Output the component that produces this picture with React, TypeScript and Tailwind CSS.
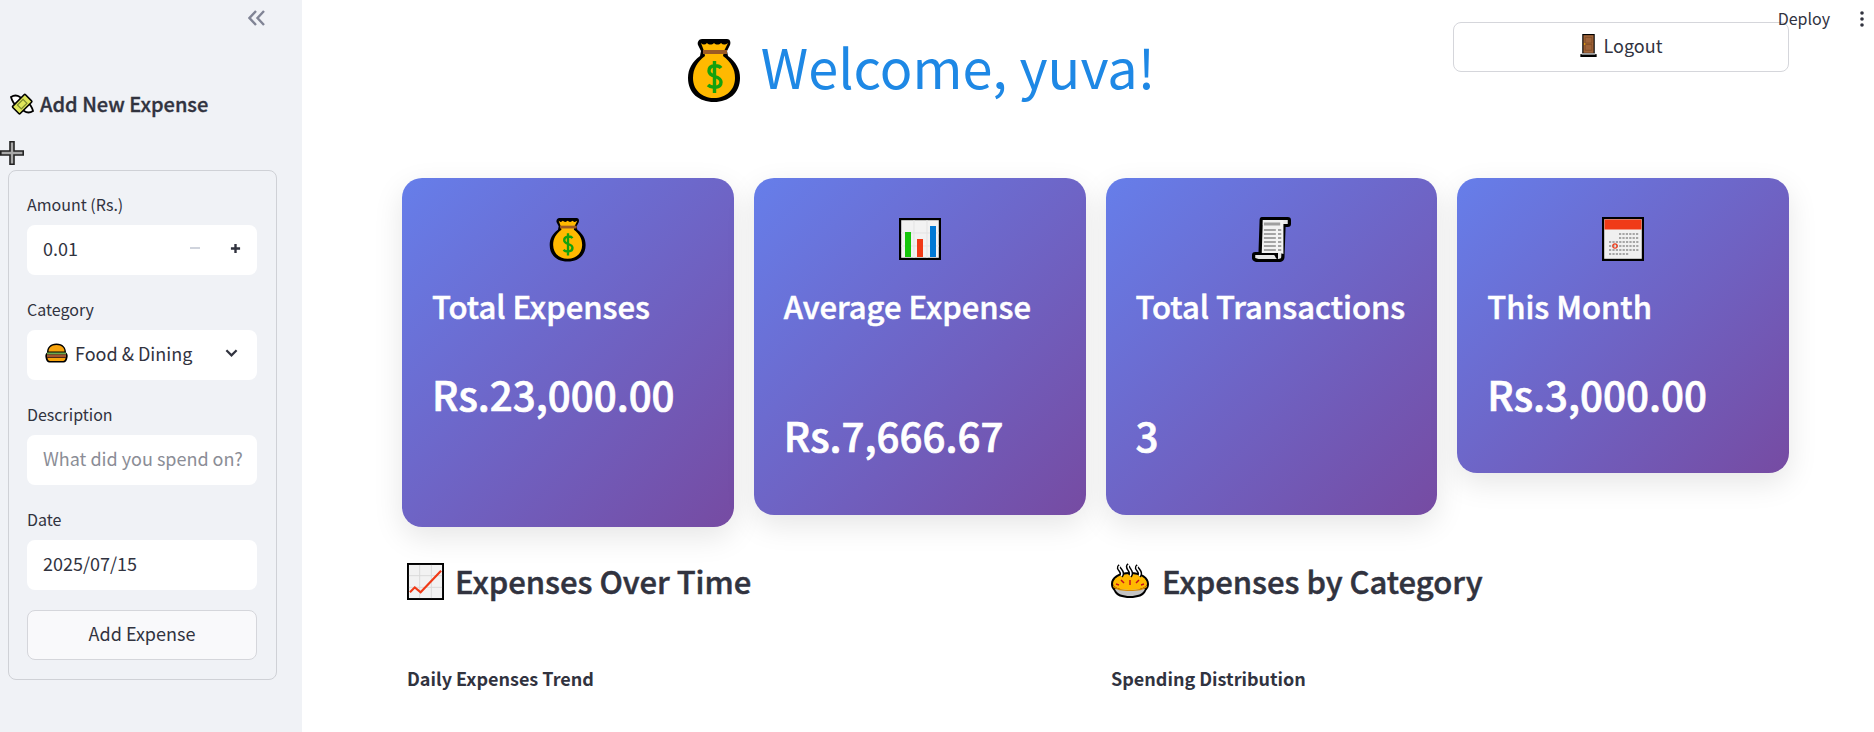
import type { ReactNode } from "react";

const font = { fontFamily: '"Noto Sans CJK SC", "Noto Sans", sans-serif' };

const MoneyBag = ({ className }: { className: string }) => (
  <svg viewBox="0 0 55 68" className={className}>
    <path d="M15 3h25c3 0 4 3 3 6l-3 6 1 5c8 6 12 13 12 22 0 15-11 24-26 24S1 57 1 42c0-9 4-16 12-22l1-5-3-6c-1-3 1-6 4-6z" fill="#000" />
    <path d="M14 7c2 2 4 2 6 0 2 2 5 2 7 0 2 2 5 2 7 0 2 2 4 2 7 0l-4 8-1 5c8 6 12 13 12 22 0 12-9 20-21 20S6 54 6 42c0-9 4-16 12-22l-1-5z" fill="#ffb900" />
    <rect x="16" y="14" width="24" height="4" fill="#9b5a25" />
    <path d="M34 32c-2-3-12-4-12 3 0 7 12 4 12 11 0 7-10 6-13 3M27.500 25v32" fill="none" stroke="#13a10e" strokeWidth="3.400" />
  </svg>
);

const BarChart = () => (
  <svg viewBox="0 0 42 42" className="h-[42px] w-[42px]">
    <rect x="1" y="1" width="40" height="40" fill="#f2f2f2" stroke="#000" strokeWidth="2.400" />
    <path d="M15 2v38M28 2v38M2 15h38M2 28h38" stroke="#e3e3e3" strokeWidth="1" />
    <rect x="6" y="14" width="6" height="25" fill="#16c60c" />
    <rect x="18" y="21" width="6" height="18" fill="#f03a17" />
    <rect x="31" y="8" width="6" height="31" fill="#0078d4" />
  </svg>
);

const Scroll = () => (
  <svg viewBox="0 0 36 46" preserveAspectRatio="none" className="h-[46px] w-[39px]">
    <path d="M9 1h24c2 0 3 1 3 3v4c0 2-1 3-3 3h-2l-1 30c0 3-2 5-5 5H5c-3 0-5-2-5-4v-3c0-2 1-3 3-3h3L7 4c0-2 1-3 2-3z" fill="#000" />
    <path d="M10 4h23v4h-5l-1 33c0 1-1 2-3 2H6l-3-1v-3h17c2 0 1 4 4 4V9l-14 0z" fill="#e6e6e6" />
    <path d="M10 4h19v34c-2-1-3-1-5-1H9z" fill="#f2f2f2" />
    <path d="M11 8h15" stroke="#a0a0a0" strokeWidth="3" />
    <path d="M11 14h11M24 14h3M11 18h11M24 18h3M11 22h11M24 22h3M11 26h11M24 26h3M11 30h11M24 30h3M11 34h11M24 34h3" stroke="#8a8a8a" strokeWidth="1.400" />
  </svg>
);

const Calendar = () => (
  <svg viewBox="0 0 42 44" className="h-[44px] w-[42px]">
    <rect x="1" y="1" width="40" height="42" fill="#f0f0f0" stroke="#000" strokeWidth="2.400" />
    <rect x="2.500" y="2.500" width="37" height="10" fill="#f03a17" />
    <path d="M17 17h20M17 21h20M7 25h30M7 29h30M7 33h30M7 37h20" stroke="#a6a6a6" strokeWidth="2.200" strokeDasharray="2.200 1.200" />
    <circle cx="13" cy="29" r="2.200" fill="none" stroke="#f03a17" strokeWidth="1.200" />
  </svg>
);

const ChartUp = () => (
  <svg viewBox="0 0 38 38" className="h-[37px] w-[37px]">
    <rect x="1" y="1" width="36" height="36" fill="#f2f2f2" stroke="#000" strokeWidth="2" />
    <path d="M13 2v34M25 2v34M2 13h34M2 25h34" stroke="#d9d9d9" strokeWidth="1" />
    <path d="M3 30l5-5 6 5L35 8" fill="none" stroke="#f03a17" strokeWidth="2.200" />
  </svg>
);

const Pie = () => (
  <svg viewBox="0 0 40 36" className="h-[36px] w-[40px]">
    <path d="M1 21c0-7 7-12 19-12s19 5 19 12c0 4-2 5-3 7-2 5-8 7-16 7s-14-2-16-7c-1-2-3-3-3-7z" fill="#000" />
    <path d="M5 26h30c-2 5-8 7-15 7s-13-2-15-7z" fill="#c4c4c4" />
    <path d="M3 21c0-6 7-10 17-10s17 4 17 10c0 3-7 6-17 6S3 24 3 21z" fill="#ffb900" />
    <path d="M3 22c3 3 9 5 17 5s14-2 17-5v2c-3 3-9 4-17 4S6 27 3 24z" fill="#d98a00" />
    <path d="M10 3c-4 3 5 5 1 10M19 2c-4 3 5 6 1 11M28 3c-4 3 5 5 1 10" fill="none" stroke="#000" strokeWidth="4.500" />
    <path d="M10 3c-4 3 5 5 1 10M19 2c-4 3 5 6 1 11M28 3c-4 3 5 5 1 10" fill="none" stroke="#fff" strokeWidth="1.600" />
    <path d="M20 17v5M11 17l3 3M29 17l-3 3M6 21l3 1M34 21l-3 1" stroke="#c50f1f" strokeWidth="1.500" />
  </svg>
);

const Door = () => (
  <svg viewBox="0 0 17 24" className="h-[23px] w-[17px]">
    <rect x="0" y="21" width="17" height="3" fill="#000" />
    <rect x="1.500" y="19.500" width="14" height="2" fill="#c4c4c4" />
    <rect x="2" y="0" width="13" height="20" fill="#000" />
    <rect x="3.200" y="1.200" width="10.600" height="18.500" fill="#a0643a" />
    <path d="M5 3.500h7v6H5zM5 11h7v6H5z" fill="none" stroke="#7c4a24" strokeWidth=".8" />
    <circle cx="4.500" cy="10.500" r=".8" fill="#ffb900" />
  </svg>
);

const Burger = () => (
  <svg viewBox="0 0 23 19" className="h-[20px] w-[23px]">
    <path d="M11.500 0C5 0 2 4 2 9 .5 10 0 12 .5 14c.3 3 2 5 4 5h14c2 0 3.700-2 4-5 .5-2 0-4-1.500-5 0-5-3-9-9.500-9z" fill="#000" />
    <path d="M11.500 1.500c-5.500 0-8 3-8 6.500h16c0-3.500-2.500-6.500-8-6.500z" fill="#f7a30c" />
    <rect x="2" y="9" width="19" height="2" fill="#6aa84f" />
    <rect x="2" y="11" width="19" height="3" fill="#a0522d" />
    <path d="M2.500 14.500h18c0 1.500-1 3-2.500 3H5c-1.500 0-2.500-1.500-2.500-3z" fill="#f7a30c" />
  </svg>
);

const Wings = () => (
  <svg viewBox="0 0 24 24" className="h-[24px] w-[24px]">
    <path d="M1 5c3-2 6-2 9 0l2 4-5 5C4 12 2 9 1 5z" fill="#fff" stroke="#000" strokeWidth="1.800" />
    <path d="M23 19c-3 2-6 2-9 0l-2-4 5-5c3 2 5 5 6 9z" fill="#fff" stroke="#000" strokeWidth="1.800" />
    <rect x="3" y="7" width="18" height="10.500" rx="1" transform="rotate(-45 12 12)" fill="#dfe65a" stroke="#000" strokeWidth="1.600" />
    <rect x="8" y="9.500" width="8" height="5.500" transform="rotate(-45 12 12)" fill="none" stroke="#7d8c2e" strokeWidth="1.200" />
  </svg>
);

const Plus = () => (
  <svg viewBox="0 0 24 24" className="h-[24px] w-[24px]">
    <path d="M10 .8h4v9.200h9.200v4H14v9.200h-4V14H.8v-4H10z" fill="#a8a8a8" stroke="#222" strokeWidth="1.600" />
  </svg>
);

function Field({ label, children }: { label: string; children: ReactNode }) {
  return (
    <div className="mb-[25px]">
      <div className="flex h-[20px] items-center pb-[2px] text-[16px] leading-5 text-[#31333f]">{label}</div>
      <div className="mt-[10px] flex h-[50px] items-center rounded-lg bg-white px-[16px] pb-[4px] text-[18px] text-[#31333f]">
        {children}
      </div>
    </div>
  );
}

function Sidebar() {
  return (
    <aside className="flex h-[732px] w-[302px] shrink-0 flex-col bg-[#f0f2f6]">
      <div className="flex h-[36px] justify-end pt-[9px] pr-[36px]">
        <svg viewBox="0 0 18 18" className="h-[18px] w-[18px]" fill="none" stroke="#808495" strokeWidth="2.400">
          <path d="M8 2L1.500 9 8 16M16 2L9.500 9 16 16" />
        </svg>
      </div>
      <div className="mt-[56px] flex h-[24px] items-center pl-[10px]">
        <Wings />
        <span className="ml-[6px] text-[20px] leading-6 font-medium text-[#31333f] [-webkit-text-stroke:0.35px_currentColor]">Add New Expense</span>
      </div>
      <div className="mt-[25px] h-[24px]">
        <Plus />
      </div>
      <form className="mt-[5px] ml-[8px] h-[510px] w-[269px] rounded-lg border border-[#cfd1d6] pt-[24px] pr-[19px] pl-[18px]">
        <Field label="Amount (Rs.)">
          <span className="flex-1">0.01</span>
          <svg viewBox="0 0 11 4" className="mr-[30px] h-[4px] w-[10px]"><rect y="1" width="11" height="2" fill="#ccd0da" /></svg>
          <svg viewBox="0 0 12 12" className="h-[11px] w-[11px]"><path d="M6 1v10M1 6h10" stroke="#31333f" strokeWidth="2.600" /></svg>
        </Field>
        <Field label="Category">
          <span className="ml-[2px]"><Burger /></span>
          <span className="ml-[7px] flex-1">Food &amp; Dining</span>
          <svg viewBox="0 0 14 10" className="mr-[3px] h-[10px] w-[13px]" fill="none" stroke="#31333f" strokeWidth="2.400"><path d="M1.500 2l5.500 5.500L12.500 2" /></svg>
        </Field>
        <Field label="Description">
          <span className="whitespace-nowrap text-[#8b8d96]">What did you spend on?</span>
        </Field>
        <Field label="Date">
          <span>2025/07/15</span>
        </Field>
        <button type="button" className="-mt-[5px] block h-[50px] w-full rounded-lg border border-[#d5d6db] bg-[#f9f9fb] pb-[4px] text-[18px] text-[#31333f]">
          Add Expense
        </button>
      </form>
    </aside>
  );
}

type CardProps = { icon: ReactNode; title: string; value: string; height: string; gap: string };

function Card({ icon, title, value, height, gap }: CardProps) {
  return (
    <div className={`w-[331.75px] shrink-0 rounded-[20px] bg-[linear-gradient(135deg,#667eea_0%,#764ba2_100%)] px-[30px] pt-[38px] text-white shadow-[0_10px_30px_rgba(0,0,0,0.1)] ${height}`}>
      <div className="flex h-[46px] items-center justify-center">{icon}</div>
      <div className="mt-[24px] text-[31px] leading-10 font-medium whitespace-nowrap [-webkit-text-stroke:0.5px_currentColor]">{title}</div>
      <div className={`text-[40.3px] leading-[50px] font-medium [-webkit-text-stroke:0.7px_currentColor] ${gap}`}>{value}</div>
    </div>
  );
}

export default function App() {
  return (
    <div className="relative flex h-[732px] w-[1874px] overflow-hidden bg-white" style={font}>
      <Sidebar />
      <main className="flex-1 pr-[85px] pl-[100px]">
        <div className="flex h-[178px] gap-[16px]">
          <div className="flex-1 pt-[28px]">
            <h1 className="flex h-[80px] items-center justify-center pl-[3px] text-[54px] leading-[80px] font-normal text-[#1e88e5]">
              <MoneyBag className="mt-[4px] mr-[19px] h-[68px] w-[55px]" />
              <span className="-translate-y-[2px]">Welcome, yuva!</span>
            </h1>
          </div>
          <div className="w-[336px] pt-[22px]">
            <button type="button" className="flex h-[50px] w-full items-center justify-center gap-[7px] rounded-lg border border-[#d5d6db] bg-white pb-[3px] text-[18px] text-[#31333f]">
              <Door />
              Logout
            </button>
          </div>
        </div>
        <div className="flex items-start gap-[20px]">
          <Card icon={<MoneyBag className="h-[47px] w-[38px]" />} title="Total Expenses" value="Rs.23,000.00" height="h-[349px]" gap="mt-[43px]" />
          <Card icon={<BarChart />} title="Average Expense" value="Rs.7,666.67" height="h-[337px]" gap="mt-[84px]" />
          <Card icon={<Scroll />} title="Total Transactions" value="3" height="h-[337px]" gap="mt-[84px]" />
          <Card icon={<Calendar />} title="This Month" value="Rs.3,000.00" height="h-[295px]" gap="mt-[43px]" />
        </div>
        <div className="mt-[34px] flex gap-[16px]">
          <section className="w-[688px] pl-[5px]">
            <h2 className="flex h-[40px] items-center text-[31px] leading-10 font-medium text-[#31333f]">
              <ChartUp />
              <span className="ml-[11px] [-webkit-text-stroke:0.5px_currentColor]">Expenses Over Time</span>
            </h2>
            <h3 className="mt-[65px] text-[18px] leading-6 font-bold text-[#31333f]">Daily Expenses Trend</h3>
          </section>
          <section className="flex-1 pl-[4px]">
            <h2 className="flex h-[40px] items-center text-[31px] leading-10 font-medium text-[#31333f]">
              <Pie />
              <span className="ml-[12px] [-webkit-text-stroke:0.5px_currentColor]">Expenses by Category</span>
            </h2>
            <h3 className="mt-[65px] pl-[1px] text-[18px] leading-6 font-bold text-[#31333f]">Spending Distribution</h3>
          </section>
        </div>
      </main>
      <div className="absolute top-[8px] right-[44px] text-[16px] leading-5 text-[#31333f]">Deploy</div>
      <svg viewBox="0 0 4 16" className="absolute top-[11px] right-[10px] h-[16px] w-[4px]" fill="#31333f">
        <circle cx="2" cy="2" r="1.800" />
        <circle cx="2" cy="8" r="1.800" />
        <circle cx="2" cy="14" r="1.800" />
      </svg>
    </div>
  );
}
